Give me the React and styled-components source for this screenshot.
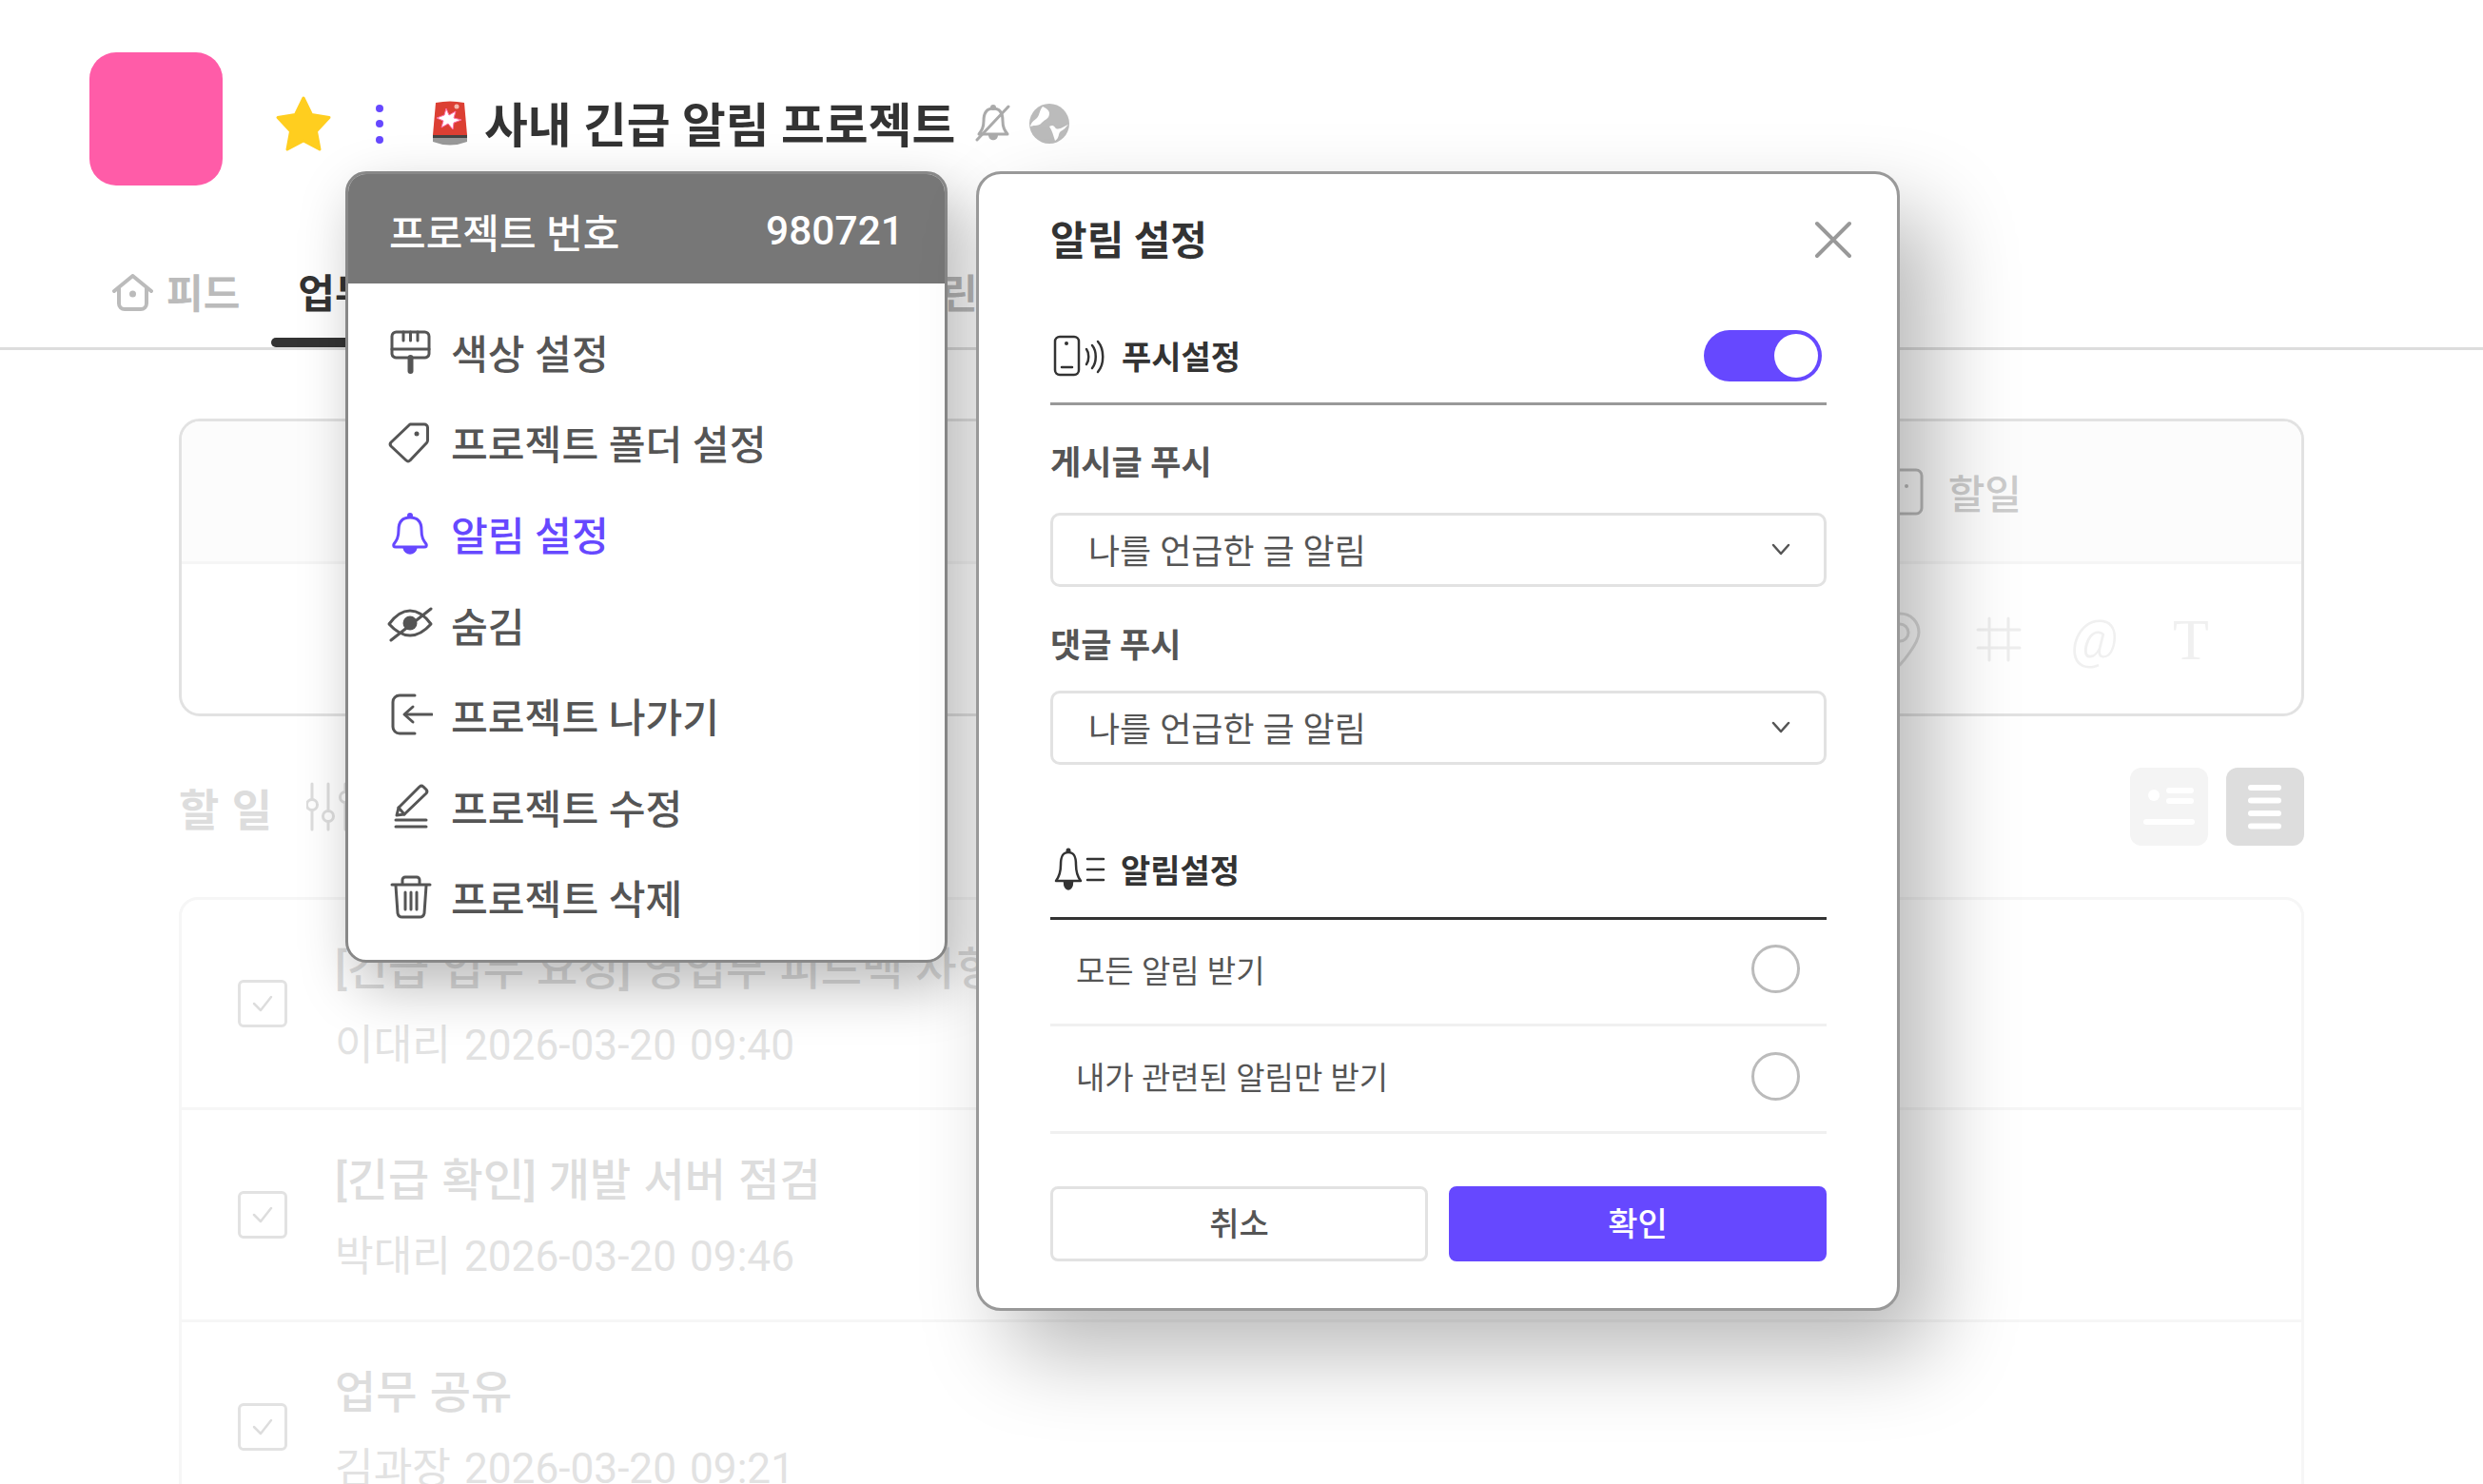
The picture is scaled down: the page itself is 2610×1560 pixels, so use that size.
import React from "react";
import styled, { createGlobalStyle } from "styled-components";

const Global = createGlobalStyle`
  html, body { margin: 0; padding: 0; background: #fff; }
  body { font-family: Roboto, "Noto Sans CJK KR", sans-serif; width: 2610px; height: 1560px; overflow: hidden; }
  * { box-sizing: border-box; }
`;

const Page = styled.div`
  position: relative;
  width: 2610px;
  height: 1560px;
  overflow: hidden;
  background: #fff;
`;

/* ---------- header ---------- */
const Header = styled.header`
  display: flex;
  align-items: flex-start;
  padding: 55px 0 0 94px;
  height: 278px;
`;
const Logo = styled.div`
  width: 140px;
  height: 140px;
  border-radius: 28px;
  background: #ff5ca8;
  flex: none;
`;
const TitleRow = styled.div`
  display: flex;
  align-items: center;
  height: 70px;
  margin: 40px 0 0 55px;
`;
const Dots = styled.div`
  display: flex;
  flex-direction: column;
  gap: 8.5px;
  margin: 0 0 0 46px;
  i {
    display: block;
    width: 8px;
    height: 8px;
    border-radius: 50%;
    background: #6648ff;
  }
`;
const Title = styled.h1`
  margin: 6px 0 0 18px;
  font-size: 49.8px;
  font-weight: 700;
  color: #333;
  white-space: nowrap;
  line-height: 70px;
`;

/* ---------- tabs ---------- */
const Tabs = styled.nav`
  display: flex;
  height: 91px;
  margin-top: -1px;
  padding-left: 118px;
  border-bottom: 3px solid #ddd;
`;
const Tab = styled.div`
  position: relative;
  display: flex;
  align-items: flex-start;
  gap: 14px;
  margin-right: ${(p) => p.$gap ?? 53}px;
  padding-top: 5px;
  font-size: 42px;
  line-height: 56px;
  font-weight: 700;
  white-space: nowrap;
  color: ${(p) => (p.$active ? "#333" : "#bbb")};
  &::after {
    content: "";
    display: ${(p) => (p.$active ? "block" : "none")};
    position: absolute;
    left: -28px;
    right: -28px;
    bottom: 0;
    height: 10px;
    border-radius: 5px;
    background: #333;
  }
`;

/* ---------- main ---------- */
const Main = styled.main`
  padding: 72px 188px 0 188px;
`;
const Composer = styled.section`
  height: 313px;
  border: 3px solid #e2e2e2;
  border-radius: 22px;
  display: flex;
  flex-direction: column;
  overflow: hidden;
`;
const ComposerTop = styled.div`
  height: 150px;
  background: #fcfcfc;
  border-bottom: 3px solid #f5f5f5;
  display: flex;
  align-items: center;
  justify-content: flex-end;
  padding-right: 294px;
  gap: 20px;
  font-size: 42px;
  font-weight: 500;
  color: #ccc;
`;
const ComposerTools = styled.div`
  flex: 1;
  display: flex;
  align-items: center;
  justify-content: flex-end;
  padding: 0 92px 0 0;
  gap: 53px;
  color: #eee;
`;
const ToolGlyph = styled.span`
  width: 48px;
  height: 48px;
  display: flex;
  align-items: center;
  justify-content: center;
  font-family: ${(p) => (p.$serif ? '"Liberation Serif", serif' : "Roboto, sans-serif")};
  font-style: ${(p) => (p.$serif ? "normal" : "italic")};
  font-size: ${(p) => (p.$serif ? 62 : 56)}px;
  font-weight: 300;
  line-height: 1;
  color: #f0f0f0;
`;

const SectionHead = styled.div`
  height: 82px;
  margin-top: 54px;
  display: flex;
  align-items: center;
  justify-content: space-between;
`;
const SectionLeft = styled.div`
  display: flex;
  align-items: center;
  gap: 36px;
`;
const SectionTitle = styled.h2`
  margin: 0;
  font-size: 46px;
  font-weight: 700;
  color: #ddd;
  word-spacing: 2px;
`;
const ViewSwitch = styled.div`
  display: flex;
  gap: 19px;
`;
const ViewBtn = styled.div`
  width: 82px;
  height: 82px;
  border-radius: 12px;
  background: ${(p) => (p.$on ? "#ddd" : "#f4f4f4")};
  display: flex;
  align-items: center;
  justify-content: center;
`;

const List = styled.section`
  margin-top: 54px;
  border: 3px solid #f6f6f6;
  border-radius: 20px;
`;
const Row = styled.article`
  height: 223px;
  display: flex;
  align-items: center;
  padding-left: 59px;
  gap: 50px;
  border-bottom: 3px solid #f6f6f6;
  &:first-child { height: 221px; }
`;
const Check = styled.div`
  width: 52px;
  height: 50px;
  flex: none;
  border: 3px solid #e2e2e2;
  border-radius: 6px;
  display: flex;
  align-items: center;
  justify-content: center;
`;
const RowText = styled.div`
  display: flex;
  flex-direction: column;
  gap: 14px;
  margin-top: 8px;
  white-space: nowrap;
`;
const RowTitle = styled.div`
  font-size: 47px;
  font-weight: 500;
  line-height: 66px;
  color: #ddd;
  word-spacing: 1.5px;
`;
const RowMeta = styled.div`
  font-size: 44.2px;
  line-height: 66px;
  color: #e2e2e2;
  word-spacing: 3px;
`;

/* ---------- project menu (popover) ---------- */
const Menu = styled.aside`
  position: absolute;
  left: 363px;
  top: 180px;
  width: 633px;
  height: 832px;
  background: #fff;
  border: 3px solid #888;
  border-radius: 22px;
  box-shadow: 12px 24px 60px rgba(0, 0, 0, 0.28);
  overflow: hidden;
`;
const MenuHead = styled.div`
  height: 115px;
  background: #777;
  display: flex;
  align-items: center;
  justify-content: space-between;
  padding: 4px 43px 0 43px;
  color: #fff;
  font-size: 42px;
  font-weight: 500;
`;
const MenuNumber = styled.span`
  font-size: 42.5px;
  font-weight: 500;
`;
const MenuList = styled.ul`
  list-style: none;
  margin: 0;
  padding: 23.5px 0 0 41px;
  display: flex;
  flex-direction: column;
`;
const MenuItem = styled.li`
  height: 95.6px;
  display: flex;
  align-items: center;
  gap: 19px;
  font-size: 42.2px;
  font-weight: 500;
  color: ${(p) => (p.$active ? "#6648ff" : "#555")};
  svg { flex: none; }
`;

/* ---------- modal ---------- */
const Modal = styled.aside`
  position: absolute;
  left: 1026px;
  top: 180px;
  width: 971px;
  height: 1198px;
  background: #fff;
  border: 3px solid #999;
  border-radius: 26px;
  padding: 0 74px 0 75px;
  box-shadow: 34px 44px 90px rgba(0, 0, 0, 0.28);
`;
const ModalHead = styled.div`
  height: 141px;
  display: flex;
  align-items: center;
  justify-content: space-between;
  padding-bottom: 8px;
`;
const ModalTitle = styled.h3`
  margin: 0;
  font-size: 42px;
  font-weight: 700;
  color: #333;
`;
const Close = styled.button`
  border: 0;
  background: none;
  padding: 0;
  margin: 4px -30px 0 0;
  width: 46px;
  height: 46px;
  display: flex;
`;
const SettingHead = styled.div`
  height: ${(p) => p.$h}px;
  display: flex;
  align-items: ${(p) => (p.$bottom ? "flex-end" : "center")};
  gap: 16px;
  border-bottom: 3px solid ${(p) => p.$line};
  font-size: 34px;
  font-weight: 700;
  color: #333;
  padding: ${(p) => (p.$bottom ? "0 0 26px 2px" : "0 0 0 3px")};
`;
const Toggle = styled.div`
  margin-left: auto;
  margin-right: 5px;
  width: 124px;
  height: 54px;
  border-radius: 27px;
  background: #6648ff;
  display: flex;
  justify-content: flex-end;
  align-items: center;
  padding-right: 4px;
  i {
    display: block;
    width: 46px;
    height: 46px;
    border-radius: 50%;
    background: #fff;
  }
`;
const FieldLabel = styled.div`
  font-size: 35px;
  font-weight: 700;
  color: #555;
  line-height: 50px;
  margin-top: ${(p) => p.$mt}px;
`;
const Select = styled.div`
  height: 78px;
  margin-top: ${(p) => p.$mt}px;
  border: 3px solid #e2e2e2;
  border-radius: 10px;
  display: flex;
  align-items: center;
  justify-content: space-between;
  padding: 0 34px 3px 37px;
  font-size: 36px;
  color: #555;
`;
const Option = styled.div`
  height: ${(p) => p.$h}px;
  display: flex;
  align-items: center;
  justify-content: space-between;
  padding: 0 28px 6px 27px;
  border-bottom: 3px solid #f0f0f0;
  font-size: 33px;
  color: #555;
`;
const Radio = styled.div`
  width: 51px;
  height: 51px;
  border: 3px solid #bbb;
  border-radius: 50%;
  background: #fff;
`;
const Buttons = styled.div`
  margin-top: 55px;
  display: grid;
  grid-template-columns: 397px 397px;
  gap: 22px;
`;
const Btn = styled.button`
  height: 79px;
  padding: 0 0 4px;
  border-radius: 8px;
  border: 3px solid ${(p) => (p.$primary ? "#6648ff" : "#e2e2e2")};
  background: ${(p) => (p.$primary ? "#6648ff" : "#fff")};
  color: ${(p) => (p.$primary ? "#fff" : "#555")};
  font-family: inherit;
  font-size: 34px;
  font-weight: 500;
`;

/* ---------- icons ---------- */
const Ico = ({ w = 48, h = 48, vb, children, ...rest }) => (
  <svg width={w} height={h} viewBox={vb || `0 0 ${w} ${h}`} fill="none" stroke="currentColor" strokeWidth="3" strokeLinecap="round" strokeLinejoin="round" {...rest}>
    {children}
  </svg>
);

const Star = () => (
  <svg width="60" height="60" viewBox="0 0 60 60" style={{ flex: "none" }}>
    <path d="M30 3 L38.5 20.5 L57 23.5 L43.5 38 L47 57 L30 48 L13 57 L16.5 38 L3 23.5 L21.5 20.5 Z" fill="#ffce1f" stroke="#ffce1f" strokeWidth="3" strokeLinejoin="round" />
  </svg>
);
const Siren = () => (
  <svg width="36" height="48" viewBox="0 0 36 48" style={{ flex: "none", marginLeft: 52 }}>
    <path d="M3 2 Q18 -1 33 2 L36 36 H0 Z" fill="#dc3f33" />
    <path d="M0 38 H36 V43 Q18 50 0 43 Z" fill="#999" />
    <rect x="0" y="36" width="36" height="3" fill="#444" />
    <path d="M14 8 L17 15 L24 11 L22 18 L30 20 L22 23 L21 30 L16 24 L9 28 L11 21 L4 18 L12 15 Z" fill="#fff" stroke="#ff6fa8" strokeWidth="1" />
    <circle cx="25" cy="6" r="2.5" fill="#f4b9ae" />
  </svg>
);
const BellOff = () => (
  <Ico w={38} h={42} style={{ color: "#aaa", marginLeft: 21 }}>
    <path d="M19 5 C11 5 9 11 9 18 C9 25 7 28 4 32 H34 C31 28 29 25 29 18 C29 11 27 5 19 5 Z" />
    <path d="M14 33 C14 40 24 40 24 33 Z" fill="#aaa" stroke="none" />
    <circle cx="19" cy="4" r="3" fill="#aaa" stroke="none" />
    <path d="M2 38 L35 3" />
  </Ico>
);
const Globe = () => (
  <svg width="42" height="42" viewBox="0 0 42 42" style={{ marginLeft: 19 }}>
    <circle cx="21" cy="21" r="21" fill="#bbb" />
    <path d="M14 3 C10 8 11 12 8 15 C5 18 2 19 1 24 C6 22 10 24 13 20 C17 16 21 16 21 10 C21 7 18 5 14 3 Z" fill="#fff" />
    <path d="M21 24 C24 28 25 33 27 39 C32 36 30 31 33 29 C37 27 38 25 41 22 C36 24 30 29 27 25 C25 22 23 23 21 24 Z" fill="#fff" />
  </svg>
);
const Home = () => (
  <Ico w={43} h={40} strokeWidth="4" style={{ marginTop: 6, color: "#bbb" }}>
    <path d="M2 18 L21.5 2 L41 18" />
    <path d="M7 15 V31 A6 6 0 0 0 13 37 H30 A6 6 0 0 0 36 31 V15" />
    <circle cx="21.5" cy="21" r="3.5" fill="currentColor" stroke="none" />
  </Ico>
);
const Brush = () => (
  <Ico>
    <path d="M10 4 H39 A4.5 4.5 0 0 1 44 8.5 V27 A4.5 4.5 0 0 1 39 31 H10 A4.5 4.5 0 0 1 5 27 V8.5 A4.5 4.5 0 0 1 10 4 Z" />
    <path d="M5 22 H44" />
    <path d="M17 4 V13 M24.5 4 V13 M32 4 V13" />
    <path d="M24.5 31 V45" strokeWidth="6" />
  </Ico>
);
const TagIco = () => (
  <Ico>
    <path d="M24 5 H39 A3.5 3.5 0 0 1 42.5 8.5 V22 A4 4 0 0 1 41.5 24.5 L24 43 A3 3 0 0 1 20 43 L4 28 A3 3 0 0 1 4 24 Z" />
    <circle cx="31" cy="15" r="2.5" fill="currentColor" stroke="none" />
  </Ico>
);
const BellIco = () => (
  <Ico>
    <path d="M24 8 C15 8 12 14 12 21 C12 29 10 32 7 36 C6 38 7 39 9 39 H39 C41 39 42 38 41 36 C38 32 36 29 36 21 C36 14 33 8 24 8 Z" />
    <path d="M18 40 C19 47 29 47 30 40 Z" fill="currentColor" />
    <circle cx="24" cy="6" r="3" fill="currentColor" stroke="none" />
  </Ico>
);
const EyeOff = () => (
  <Ico>
    <path d="M2 24 C10 13 17 10 24 10 C31 10 38 13 46 24 C38 33 31 36 24 36 C17 36 10 33 2 24 Z" />
    <circle cx="24" cy="23" r="7.5" fill="currentColor" stroke="none" />
    <path d="M4 41 L46 8" />
  </Ico>
);
const Leave = () => (
  <Ico>
    <path d="M29 3 H13 A7 7 0 0 0 6 10 V36 A7 7 0 0 0 13 43 H29" />
    <path d="M47 23 H19" />
    <path d="M27 15 L18 23 L27 31" />
  </Ico>
);
const Pencil = () => (
  <Ico>
    <path d="M10 34 L12 26 L34 4 A3 3 0 0 1 38 4 L41 7 A3 3 0 0 1 41 11 L18 33 Z" />
    <path d="M12 26 L18 33" />
    <path d="M9 39 H41" />
    <path d="M9 46 H41" />
  </Ico>
);
const Trash = () => (
  <Ico>
    <path d="M5 11 H45" />
    <path d="M16 10 V6 A3 3 0 0 1 19 3 H31 A3 3 0 0 1 34 6 V10" />
    <path d="M9 12 L11 41 A5 5 0 0 0 16 45 H34 A5 5 0 0 0 39 41 L41 12" />
    <path d="M19 19 V37 M25 19 V37 M31 19 V37" />
  </Ico>
);
const PhoneWave = () => (
  <Ico w={56} h={44} strokeWidth="2.5">
    <rect x="2" y="2" width="25" height="40" rx="5" />
    <circle cx="14" cy="9" r="2" fill="currentColor" stroke="none" />
    <path d="M9 34 H20" />
    <path d="M35 15 C38 19 38 27 35 31" />
    <path d="M41 11 C46 17 46 29 41 35" />
    <path d="M47 7 C54 15 54 31 47 39" />
  </Ico>
);
const BellList = () => (
  <Ico w={56} h={48} strokeWidth="2.5">
    <path d="M17 6 C10 6 9 12 9 19 C9 27 7 32 4 36 H30 C27 32 25 27 25 19 C25 12 24 6 17 6 Z" />
    <path d="M13 37 C13 47 21 47 21 37 Z" fill="currentColor" />
    <circle cx="17" cy="4" r="2.5" fill="currentColor" stroke="none" />
    <path d="M37 13 H54 M37 24 H54 M37 35 H54" />
  </Ico>
);
const Chevron = () => (
  <Ico w={22} h={22} strokeWidth="2.5" style={{ color: "#555" }}>
    <path d="M3 7 L11 16 L19 7" />
  </Ico>
);
const CloseIco = () => (
  <Ico w={46} h={46} strokeWidth="4" style={{ color: "#999" }}>
    <path d="M6 6 L40 40 M40 6 L6 40" />
  </Ico>
);
const Pin = () => (
  <Ico w={48} h={60} style={{ color: "#ddd", marginRight: 3 }}>
    <path d="M24 3 C12 3 4 12 4 23 C4 35 24 57 24 57 C24 57 44 35 44 23 C44 12 36 3 24 3 Z" />
    <circle cx="24" cy="23" r="9" />
  </Ico>
);
const Hash = () => (
  <Ico w={48} h={48} style={{ color: "#eee" }}>
    <path d="M14 2 V46 M34 2 V46 M2 14 H46 M2 33 H46" />
  </Ico>
);
const Sliders = () => (
  <Ico w={48} h={52} style={{ color: "#ddd" }}>
    <path d="M6 2 V18 M6 30 V50 M23 2 V30 M23 42 V50 M41 2 V10 M41 22 V50" />
    <circle cx="6" cy="24" r="5.5" />
    <circle cx="23" cy="36" r="5.5" />
    <circle cx="41" cy="16" r="5.5" />
  </Ico>
);
const CardView = () => (
  <svg width="56" height="46" viewBox="0 0 56 46" fill="#fff">
    <circle cx="12" cy="11" r="6" />
    <rect x="25" y="3" width="29" height="6" rx="3" />
    <rect x="25" y="14" width="29" height="6" rx="3" />
    <rect x="1" y="36" width="54" height="6" rx="3" />
  </svg>
);
const LinesView = () => (
  <svg width="36" height="48" viewBox="0 0 36 48" fill="#fff">
    <rect y="1" width="35" height="6" rx="3" />
    <rect y="14.5" width="35" height="6" rx="3" />
    <rect y="28" width="35" height="6" rx="3" />
    <rect y="41.5" width="35" height="6" rx="3" />
  </svg>
);
const TickIco = () => (
  <Ico w={24} h={20} strokeWidth="2.5" style={{ color: "#ddd" }}>
    <path d="M3 10 L10 17 L21 3" />
  </Ico>
);
const NoteIco = () => (
  <Ico w={40} h={50} style={{ color: "#bbb" }}>
    <rect x="2" y="2" width="30" height="46" rx="6" />
    <circle cx="16" cy="19" r="2" fill="currentColor" stroke="none" />
  </Ico>
);

const tabs = ["일정표", "자료실", "프로젝"];

const rows = [
  { title: "[긴급 업무 요청] 영업부 피드백 사항", meta: "이대리 2026-03-20 09:40" },
  { title: "[긴급 확인] 개발 서버 점검", meta: "박대리 2026-03-20 09:46" },
  { title: "업무 공유", meta: "김과장 2026-03-20 09:21" },
];

const menu = [
  { icon: <Brush />, label: "색상 설정" },
  { icon: <TagIco />, label: "프로젝트 폴더 설정" },
  { icon: <BellIco />, label: "알림 설정", active: true },
  { icon: <EyeOff />, label: "숨김" },
  { icon: <Leave />, label: "프로젝트 나가기" },
  { icon: <Pencil />, label: "프로젝트 수정" },
  { icon: <Trash />, label: "프로젝트 삭제" },
];

export default function App() {
  return (
    <Page>
      <Global />
      <Header>
        <Logo />
        <TitleRow>
          <Star />
          <Dots><i /><i /><i /></Dots>
          <Siren />
          <Title>사내 긴급 알림 프로젝트</Title>
          <BellOff />
          <Globe />
        </TitleRow>
      </Header>

      <Tabs>
        <Tab $gap={61}><Home />피드</Tab>
        <Tab $active>업무</Tab>
        {tabs.map((t) => (
          <Tab key={t}>{t}</Tab>
        ))}
        <Tab>캘린더</Tab>
      </Tabs>

      <Main>
        <Composer>
          <ComposerTop>
            <NoteIco />
            할일
          </ComposerTop>
          <ComposerTools>
            <Pin />
            <Hash />
            <ToolGlyph>@</ToolGlyph>
            <ToolGlyph $serif>T</ToolGlyph>
          </ComposerTools>
        </Composer>

        <SectionHead>
          <SectionLeft>
            <SectionTitle>할 일</SectionTitle>
            <Sliders />
          </SectionLeft>
          <ViewSwitch>
            <ViewBtn><CardView /></ViewBtn>
            <ViewBtn $on><LinesView /></ViewBtn>
          </ViewSwitch>
        </SectionHead>

        <List>
          {rows.map((r) => (
            <Row key={r.meta}>
              <Check><TickIco /></Check>
              <RowText>
                <RowTitle>{r.title}</RowTitle>
                <RowMeta>{r.meta}</RowMeta>
              </RowText>
            </Row>
          ))}
        </List>
      </Main>

      <Menu>
        <MenuHead>
          <span>프로젝트 번호</span>
          <MenuNumber>980721</MenuNumber>
        </MenuHead>
        <MenuList>
          {menu.map((m) => (
            <MenuItem key={m.label} $active={m.active}>
              {m.icon}
              {m.label}
            </MenuItem>
          ))}
        </MenuList>
      </Menu>

      <Modal>
        <ModalHead>
          <ModalTitle>알림 설정</ModalTitle>
          <Close aria-label="닫기"><CloseIco /></Close>
        </ModalHead>
        <SettingHead $h={102} $line="#999">
          <PhoneWave />
          푸시설정
          <Toggle><i /></Toggle>
        </SettingHead>
        <FieldLabel $mt={37}>게시글 푸시</FieldLabel>
        <Select $mt={26}>나를 언급한 글 알림<Chevron /></Select>
        <FieldLabel $mt={38}>댓글 푸시</FieldLabel>
        <Select $mt={21}>나를 언급한 글 알림<Chevron /></Select>
        <SettingHead $h={163} $line="#333" $bottom>
          <BellList />
          알림설정
        </SettingHead>
        <Option $h={112}>모든 알림 받기<Radio /></Option>
        <Option $h={113}>내가 관련된 알림만 받기<Radio /></Option>
        <Buttons>
          <Btn>취소</Btn>
          <Btn $primary>확인</Btn>
        </Buttons>
      </Modal>
    </Page>
  );
}
